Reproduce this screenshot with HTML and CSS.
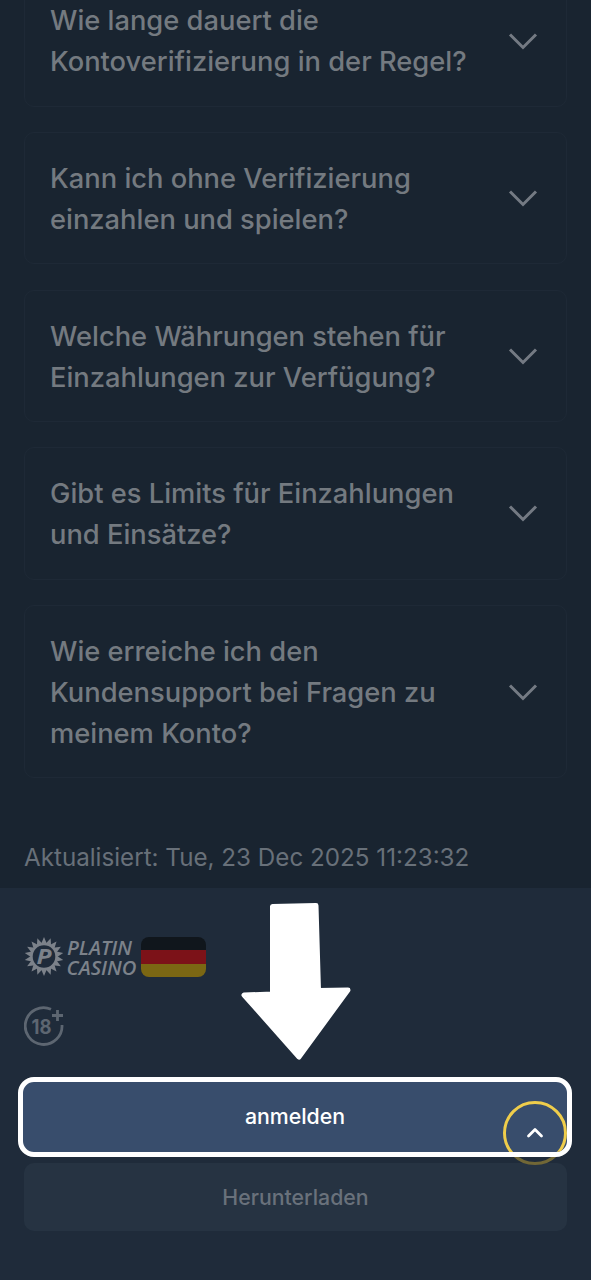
FILE: index.html
```html
<!DOCTYPE html>
<html lang="de">
<head>
<meta charset="utf-8">
<title>Platin Casino</title>
<link rel="stylesheet" href="styles.css">
</head>
<body>
<main class="faq">
  <section class="card"><h3>Wie lange dauert die<br>Kontoverifizierung in der Regel?</h3><svg class="chevron" viewBox="0 0 30 18"><path d="M2 2.500 15 15.500 28 2.500"/></svg></section>
  <section class="card"><h3>Kann ich ohne Verifizierung<br>einzahlen und spielen?</h3><svg class="chevron" viewBox="0 0 30 18"><path d="M2 2.500 15 15.500 28 2.500"/></svg></section>
  <section class="card"><h3>Welche Währungen stehen für<br>Einzahlungen zur Verfügung?</h3><svg class="chevron" viewBox="0 0 30 18"><path d="M2 2.500 15 15.500 28 2.500"/></svg></section>
  <section class="card"><h3>Gibt es Limits für Einzahlungen<br>und Einsätze?</h3><svg class="chevron" viewBox="0 0 30 18"><path d="M2 2.500 15 15.500 28 2.500"/></svg></section>
  <section class="card"><h3>Wie erreiche ich den<br>Kundensupport bei Fragen zu<br>meinem Konto?</h3><svg class="chevron" viewBox="0 0 30 18"><path d="M2 2.500 15 15.500 28 2.500"/></svg></section>
  <p class="updated">Aktualisiert: Tue, 23 Dec 2025 11:23:32</p>
</main>
<footer class="footer">
  <div class="brand">
    <svg class="logo" viewBox="0 0 113 42">
      <defs><path id="ray" d="M16.800 8.500 20 1 23.200 8.500Z"/></defs>
      <g fill="#7c828a">
        <use href="#ray"/><use href="#ray" transform="rotate(20 20 20.500)"/><use href="#ray" transform="rotate(40 20 20.500)"/><use href="#ray" transform="rotate(60 20 20.500)"/><use href="#ray" transform="rotate(80 20 20.500)"/><use href="#ray" transform="rotate(100 20 20.500)"/><use href="#ray" transform="rotate(120 20 20.500)"/><use href="#ray" transform="rotate(140 20 20.500)"/><use href="#ray" transform="rotate(160 20 20.500)"/><use href="#ray" transform="rotate(180 20 20.500)"/><use href="#ray" transform="rotate(200 20 20.500)"/><use href="#ray" transform="rotate(220 20 20.500)"/><use href="#ray" transform="rotate(240 20 20.500)"/><use href="#ray" transform="rotate(260 20 20.500)"/><use href="#ray" transform="rotate(280 20 20.500)"/><use href="#ray" transform="rotate(300 20 20.500)"/><use href="#ray" transform="rotate(320 20 20.500)"/><use href="#ray" transform="rotate(340 20 20.500)"/>
      </g>
      <circle cx="20" cy="20.500" r="12.300" fill="#1f2b3a" stroke="#7c828a" stroke-width="2"/>
      <text class="logo-p" x="12.500" y="28" textLength="15" lengthAdjust="spacingAndGlyphs">P</text>
      <text class="logo-word" x="43" y="18.800" textLength="65" lengthAdjust="spacingAndGlyphs">PLATIN</text>
      <text class="logo-word" x="42.500" y="38.800" textLength="70" lengthAdjust="spacingAndGlyphs">CASINO</text>
    </svg>
    <div class="flag"><i class="black"></i><i class="red"></i><i class="gold"></i></div>
  </div>
  <svg class="age" viewBox="0 0 42 42">
    <path d="M27 3.200A18.400 18.400 0 1 0 38 19"/>
    <path d="M33.500 4V15M28 9.500H39"/>
    <text x="7.500" y="27.700" textLength="20" lengthAdjust="spacingAndGlyphs">18</text>
  </svg>
  <div class="actions">
    <div class="login"><span>anmelden</span>
      <svg class="up" viewBox="0 0 64 64"><circle cx="32" cy="32" r="30.500"/><path d="M25.500 35 32 28.500 38.500 35"/></svg>
    </div>
    <div class="download">Herunterladen</div>
    <div class="up-shade"></div>
  </div>
  <svg class="arrow" viewBox="0 0 110 160"><path d="M31.500 6.500 75 5.500 77.500 90.500 107 90 58 157 3 95 31.500 94Z"/></svg>
</footer>
</body>
</html>
```
FILE: styles.css
```css
* { box-sizing: border-box; }
body { margin: 0; width: 591px; height: 1280px; overflow: hidden; background: #1f2b3a; font-family: Inter, sans-serif; }
.faq { height: 888px; padding: 0 24px; overflow: hidden; background: #192430; display: flex; flex-direction: column; gap: 25.200px; }
.card { flex: none; display: flex; justify-content: space-between; align-items: center; padding: 23.500px 28px 23.500px 25px; border: 1px solid #1e2936; border-radius: 10px; }
.card:first-child { margin-top: -25.500px; }
.card h3 { margin: 0; padding-top: 1.400px; font-size: 27.300px; line-height: 41px; font-weight: 500; color: #747a80; white-space: nowrap; }
.chevron { width: 30px; height: 18px; flex: none; fill: none; stroke: #747a83; stroke-width: 3; }
.updated { margin: 39px 0 0; font-size: 24.200px; line-height: 32px; color: #687079; white-space: nowrap; }
.footer { position: relative; height: 392px; padding-top: 48px; background: #1f2b3a; }
.brand { display: flex; padding-left: 24px; height: 42px; gap: 4px; }
.logo { width: 113px; height: 42px; overflow: visible; }
.logo text { font-family: "Open Sans", sans-serif; font-style: italic; fill: #7c828a; }
.logo-word { font-size: 20.500px; font-weight: 600; }
.logo-p { font-size: 21px; font-weight: 700; }
.flag { width: 65px; height: 40px; margin-top: 1px; border-radius: 8px; overflow: hidden; display: grid; grid-template-rows: repeat(3, 1fr); }
.black { background: #10161c; }
.red { background: #7c1218; }
.gold { background: #7b6713; }
.age { display: block; width: 42px; height: 42px; margin: 28px 0 0 24px; fill: none; stroke: #5d6671; stroke-width: 2.800; }
.age text { font: 700 20px Inter, sans-serif; fill: #5d6671; stroke: none; }
.actions { position: relative; margin: 29px 19px 0 18px; display: flex; flex-direction: column; }
.login { position: relative; z-index: 2; height: 80px; border: 5px solid #fff; border-radius: 16px; background: #384d6c; overflow: hidden; display: flex; align-items: center; justify-content: center; color: #fff; font-size: 21.300px; font-weight: 550; }
.login span { margin-bottom: 2px; }
.up { position: absolute; left: 480px; top: 19px; width: 64px; height: 64px; fill: none; stroke: #efcd4b; stroke-width: 3; }
.up path { stroke: #fff; stroke-width: 2.800; stroke-linecap: round; stroke-linejoin: round; }
.download { height: 68px; margin: 6px 5px 0 6px; border-radius: 10px; background: #263342; display: flex; align-items: center; justify-content: center; color: #69717b; font-size: 21.300px; font-weight: 500; }
.up-shade { position: absolute; z-index: 1; left: 485px; top: 24px; width: 64px; height: 64px; border: 3px solid #716736; border-radius: 50%; }
.arrow { position: absolute; left: 240.500px; top: 12px; width: 110px; height: 160px; fill: #fff; stroke: #fff; stroke-width: 5; stroke-linejoin: round; }
```
